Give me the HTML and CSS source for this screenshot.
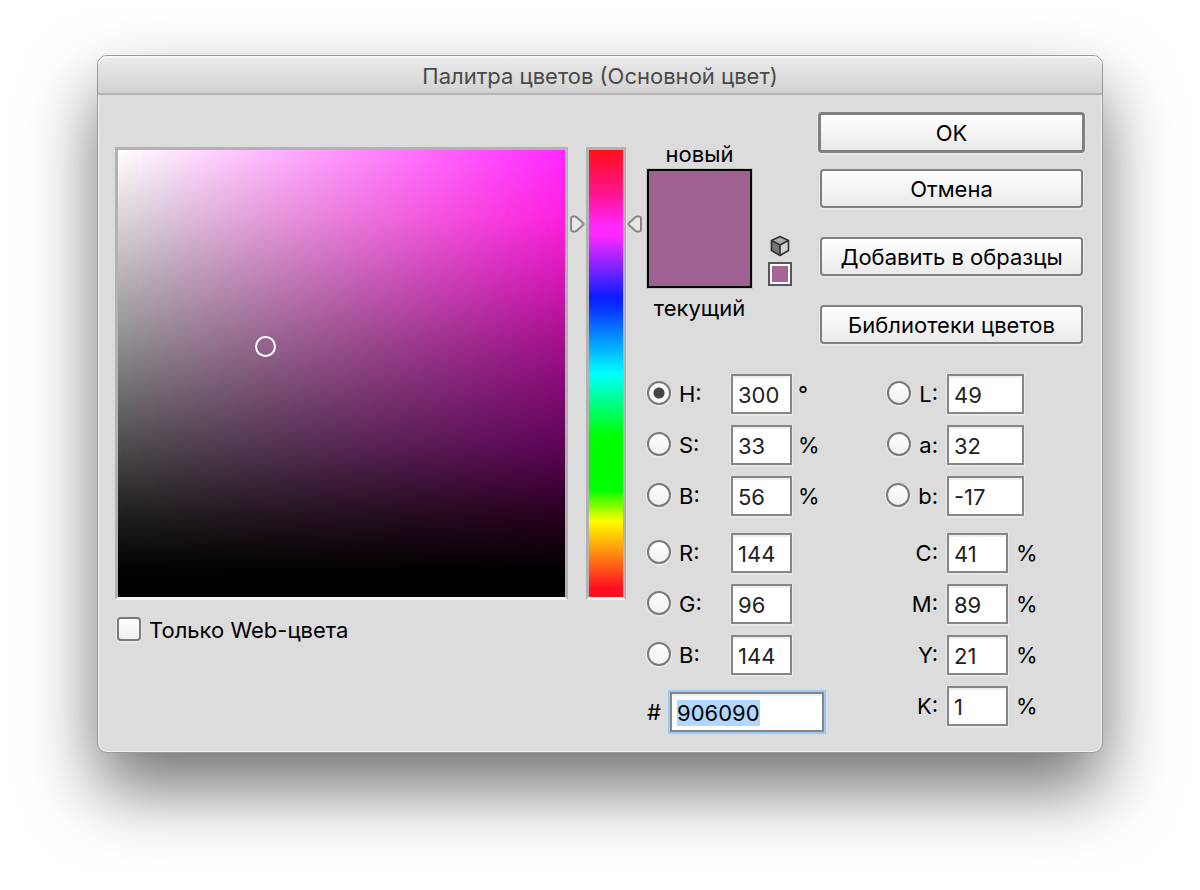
FILE: index.html
```html
<!DOCTYPE html>
<html lang="ru">

<head>
    <meta charset="utf-8" />
    <meta name="viewport" content="width=device-width, initial-scale=1.0">
    <title>Палитра цветов</title>
    <link rel="stylesheet" href="styles.css">
</head>

<body>
    <form class="dialog" onsubmit="return false">
        <h1 class="dialog-title">Палитра цветов (Основной цвет)</h1>
        <div class="dialog-body">
            <div class="picker">
                <div class="picker-line">
                    <div class="well field">
                        <div class="field-marker"></div>
                    </div>
                    <div class="well hue">
                        <svg class="arrow arrow-left" width="16" height="18" viewBox="0 0 16 18">
                            <path d="M2 3.5Q2 1.5 4 1.5H6Q7 1.5 8 2.4L14 8Q15 9 14 10L8 15.6Q7 16.5 6 16.5H4Q2 16.5 2 14.5Z" />
                        </svg>
                        <svg class="arrow arrow-right" width="16" height="18" viewBox="0 0 16 18">
                            <path d="M14 3.5Q14 1.5 12 1.5H10Q9 1.5 8 2.4L2 8Q1 9 2 10L8 15.6Q9 16.5 10 16.5H12Q14 16.5 14 14.5Z" />
                        </svg>
                    </div>
                </div>
                <label class="web-only"><input type="checkbox" class="checkbox"> Только Web-цвета</label>
            </div>

            <div class="panel">
                <div class="panel-top">
                    <div class="preview">
                        <div>новый</div>
                        <div class="preview-color"></div>
                        <div>текущий</div>
                    </div>
                    <div class="web-safe">
                        <svg width="20" height="22" viewBox="0 0 20 22">
                            <path fill="#aaa" d="M10 1.5L18.5 5.5L10 10L1.5 5.5Z" />
                            <path fill="#777" d="M1.5 5.5L10 10V20.5L1.5 15.5Z" />
                            <path fill="#d2d2d2" d="M18.5 5.5L10 10V20.5L18.5 15.5Z" />
                            <path fill="none" stroke="#333" stroke-width="1.7" stroke-linejoin="round"
                                d="M10 1.5L18.5 5.5V15.5L10 20.5L1.5 15.5V5.5ZM1.5 5.5L10 10L18.5 5.5M10 10V20.5" />
                        </svg>
                        <button type="button" class="web-safe-color" aria-label="Ближайший Web-цвет"></button>
                    </div>
                    <div class="buttons">
                        <button class="button button-default">OK</button>
                        <button type="button" class="button">Отмена</button>
                        <button type="button" class="button button-spaced">Добавить в образцы</button>
                        <button type="button" class="button button-spaced">Библиотеки цветов</button>
                    </div>
                </div>

                <div class="models">
                    <div class="model">
                        <div class="row">
                            <label class="name"><input type="radio" name="axis" class="radio" checked>H:</label>
                            <input class="value" value="300" aria-label="H">
                            <span class="unit">°</span>
                        </div>
                        <div class="row">
                            <label class="name"><input type="radio" name="axis" class="radio">S:</label>
                            <input class="value" value="33" aria-label="S">
                            <span class="unit">%</span>
                        </div>
                        <div class="row">
                            <label class="name"><input type="radio" name="axis" class="radio">B:</label>
                            <input class="value" value="56" aria-label="B">
                            <span class="unit">%</span>
                        </div>
                        <div class="row row-group">
                            <label class="name"><input type="radio" name="axis" class="radio">R:</label>
                            <input class="value" value="144" aria-label="R">
                        </div>
                        <div class="row">
                            <label class="name"><input type="radio" name="axis" class="radio">G:</label>
                            <input class="value" value="96" aria-label="G">
                        </div>
                        <div class="row">
                            <label class="name"><input type="radio" name="axis" class="radio">B:</label>
                            <input class="value" value="144" aria-label="B (RGB)">
                        </div>
                        <div class="row row-group">
                            <label class="hex-name" for="hex">#</label>
                            <input class="value hex" id="hex" value="906090">
                        </div>
                    </div>

                    <div class="model model-right">
                        <div class="row">
                            <label class="name"><input type="radio" name="axis" class="radio">L:</label>
                            <input class="value value-wide" value="49" aria-label="L">
                        </div>
                        <div class="row">
                            <label class="name"><input type="radio" name="axis" class="radio">a:</label>
                            <input class="value value-wide" value="32" aria-label="a">
                        </div>
                        <div class="row">
                            <label class="name"><input type="radio" name="axis" class="radio">b:</label>
                            <input class="value value-wide" value="-17" aria-label="b">
                        </div>
                        <div class="row row-group">
                            <label class="name" for="cyan">C:</label>
                            <input class="value" id="cyan" value="41">
                            <span class="unit">%</span>
                        </div>
                        <div class="row">
                            <label class="name" for="magenta">M:</label>
                            <input class="value" id="magenta" value="89">
                            <span class="unit">%</span>
                        </div>
                        <div class="row">
                            <label class="name" for="yellow">Y:</label>
                            <input class="value" id="yellow" value="21">
                            <span class="unit">%</span>
                        </div>
                        <div class="row">
                            <label class="name" for="black">K:</label>
                            <input class="value" id="black" value="1">
                            <span class="unit">%</span>
                        </div>
                    </div>
                </div>
            </div>
        </div>
    </form>
    <script>
        // Hex value is ready to be replaced right after opening
        const hex = document.querySelector('#hex');
        hex.focus();
        hex.select();
    </script>
</body>

</html>
```
FILE: styles.css
```css
* {
    box-sizing: border-box;
}

body {
    min-height: 100vh;
    margin: 0;
    padding: 55px 97px;
    background: #fff;
    color: #000;
    font: 22px/30px Inter, "Noto Sans", sans-serif;
}

input,
button {
    margin: 0;
    font: inherit;
    color: inherit;
}

.dialog {
    min-width: 1006px;
    border: 1px solid #999;
    border-radius: 10px;
    background: #dcdcdc;
    box-shadow: inset 0 0 0 1px #f2f2f2, 0 36px 70px rgba(0, 0, 0, 0.55);
}

.dialog-title {
    height: 39px;
    margin: 0;
    border-bottom: 2px solid #b4b4b4;
    border-radius: 9px 9px 0 0;
    background: linear-gradient(#ececec, #d2d2d2);
    box-shadow: inset 0 2px 0 #f6f6f6;
    color: #4a4a4a;
    font-size: 22px;
    font-weight: 400;
    line-height: 40px;
    text-align: center;
}

.dialog-body {
    display: flex;
    gap: 21px;
    padding: 17px 17px 20px;
}

/* left side */

.picker {
    flex: 1;
    padding-top: 35px;
}

.picker-line {
    display: flex;
    gap: 18px;
}

.well {
    position: relative;
    height: 453px;
    border: 3px solid #b2b2b2;
    border-bottom-color: #f4f4f4;
}

.field {
    flex: 1;
    background: linear-gradient(#ff28ff, #ff20e0 15%, #c414a8 34%, #a00f8a 44%, #60045a 66%, #28001e 82%, #000 95%);
}

/* gray axis, fades out towards the pure hue */
.field::before {
    content: "";
    position: absolute;
    inset: 0;
    background: linear-gradient(#fff, #8c8c8c 44%, #505050 65%, #1c1c1c 83%, #000 95%);
    -webkit-mask-image: linear-gradient(to right, #000, transparent);
    mask-image: linear-gradient(to right, #000, transparent);
}

.field-marker {
    position: absolute;
    left: 33%;
    top: 44%;
    width: 21px;
    height: 21px;
    margin: -11px;
    border: 2px solid #fff;
    border-radius: 50%;
}

.hue {
    width: 40px;
    background: linear-gradient(#ff1018, #ff1493 10%, #ff28ff 17%, #ff28ff 19%, #0a1eff 33%, #0a2eff 35%,
            #0ff 50%, #0f0 64%, #0f0 76%, #ff0 83%, #ff1020 98%);
}

.arrow {
    position: absolute;
    top: 65px;
    fill: #e6e6e6;
    stroke: #888;
    stroke-width: 2;
}

.arrow-left {
    right: 38px;
}

.arrow-right {
    left: 38px;
}

.web-only {
    display: inline-flex;
    align-items: center;
    gap: 8px;
    margin: 15px 0 0 2px;
}

.checkbox,
.radio {
    appearance: none;
    width: 24px;
    height: 24px;
    margin-bottom: 3px;
    border: 2px solid #7a7a7a;
    background: linear-gradient(#fff, #f0f0f0);
    box-shadow: 0 1px 0 1px #e8e8e8;
}

.checkbox {
    border-radius: 4px;
}

.radio {
    border-radius: 50%;
}

.radio:checked {
    background: radial-gradient(circle, #444 5px, #f8f8f8 6px);
}

/* right side */

.panel {
    width: 438px;
}

.panel-top {
    display: flex;
}

.preview {
    width: 105px;
    padding-top: 27px;
    text-align: center;
}

.preview-color {
    height: 119px;
    margin-bottom: 5px;
    border: 2px solid #000;
    background: #9e6090;
    box-shadow: 0 0 0 1px #c4c4c4;
}

.web-safe {
    display: flex;
    flex-direction: column;
    align-items: center;
    gap: 5px;
    width: 24px;
    margin: 123px 26px 0 16px;
}

.web-safe-color {
    width: 24px;
    height: 24px;
    padding: 0;
    border: 2px solid #555;
    background: #a86498;
    box-shadow: inset 0 0 0 2px #fff;
}

.buttons {
    display: flex;
    flex: 1;
    flex-direction: column;
    padding: 0 2px;
}

.button {
    height: 39px;
    padding: 0;
    border: 2px solid #808080;
    border-radius: 4px;
    background: linear-gradient(#fff, #eaeaea);
    box-shadow: 0 1px 0 1px #e8e8e8;
}

.button-default {
    height: 41px;
    margin: 0 -2px 16px;
    border-width: 3px;
}

.button-spaced {
    margin-top: 29px;
}

.models {
    display: flex;
    justify-content: space-between;
    margin-top: 30px;
}

.model {
    display: flex;
    flex-direction: column;
    gap: 11px;
}

.row {
    display: flex;
    align-items: center;
    height: 40px;
}

.row-group {
    margin-top: 6px;
}

.name {
    display: flex;
    align-items: center;
    gap: 8px;
    width: 84px;
}

.value {
    width: 61px;
    height: 40px;
    padding: 2px 5px 0;
    border: 2px solid #868686;
    border-radius: 0;
    background: #fff;
    box-shadow: inset 0 2px 1px #eee, 0 1px 0 1px #e8e8e8;
    color: #222;
}

.unit {
    padding-left: 6px;
}

.hex-name {
    width: 23px;
}

.hex {
    width: 154px;
    outline: 2px solid #9ac8f8;
    color: #000;
}

.hex::selection {
    background: #b2d7ff;
    color: #000;
}

.model-right {
    width: 199px;
}

.model-right .name {
    justify-content: flex-end;
    width: 61px;
    padding-right: 9px;
}

.model-right .unit {
    padding-left: 8px;
}

.value-wide {
    width: 77px;
}
```
